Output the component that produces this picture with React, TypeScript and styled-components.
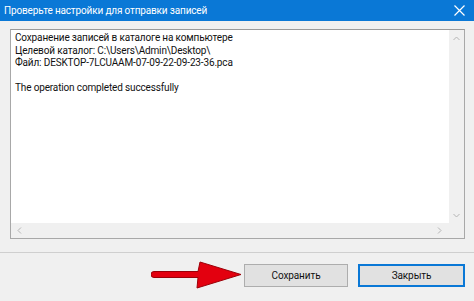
import React from "react";
import styled, { createGlobalStyle } from "styled-components";

const Global = createGlobalStyle`
  html, body { margin: 0; padding: 0; }
  body { width: 474px; height: 301px; overflow: hidden; background: #f0f0f0;
    font-family: Roboto, "Noto Sans", sans-serif; }
`;

const Window = styled.div`
  width: 474px;
  height: 301px;
  display: flex;
  flex-direction: column;
  background: #f0f0f0;
`;

const TitleBar = styled.div`
  height: 21px;
  background: #0a78d6;
  color: #fff;
  display: flex;
  align-items: center;
  justify-content: space-between;
  padding: 0 8px 0 4px;
  font-size: 10px;
  letter-spacing: -0.15px;
`;

const CloseX = styled.svg`
  width: 11px;
  height: 11px;
  margin-right: 1px;
`;

const Body = styled.div`
  padding: 8px 9px 0 10px;
  height: 223px;
  display: flex;
  flex-direction: column;
  border-bottom: 1px solid #cfcfcf;
`;

const TextBox = styled.div`
  height: 208px;
  border: 1px solid #a8a8a8;
  border-top-color: #9a9a9a;
  background: #fff;
  display: grid;
  grid-template-columns: 1fr 15px;
  grid-template-rows: 1fr 15px;
`;

const Content = styled.div`
  padding: 2px 4px;
  font-size: 10px;
  letter-spacing: -0.15px;
  line-height: 12.5px;
  color: #111;
  white-space: pre;
`;

const VScroll = styled.div`
  background: #f0f0f0;
  display: flex;
  flex-direction: column;
  justify-content: space-between;
  align-items: center;
  padding: 5px 0 4px;
`;

const HScroll = styled.div`
  background: #f0f0f0;
  display: flex;
  justify-content: space-between;
  align-items: center;
  padding: 0 6px 0 5px;
`;

const Corner = styled.div`
  background: #f0f0f0;
`;

const Footer = styled.div`
  flex: 1;
  display: flex;
  justify-content: flex-end;
  align-items: center;
  gap: 10px;
  padding: 0 9px 4px 0;
`;

const Button = styled.button<{ $primary?: boolean }>`
  width: ${(p) => (p.$primary ? "107px" : "104px")};
  height: 23px;
  font-family: inherit;
  font-size: 10px;
  letter-spacing: -0.1px;
  color: #111;
  background: #e1e1e1;
  border: ${(p) => (p.$primary ? "2px solid #0a78d6" : "1px solid #adadad")};
  padding: 0;
`;

const Arrow = styled.svg`
  width: 92px;
  height: 30px;
  margin-right: -9px;
  margin-top: 2px;
  z-index: 1;
`;

const Chevron = ({ d }: { d: string }) => (
  <svg width="7" height="7" viewBox="0 0 7 7">
    <path d={d} stroke="#b4b4b4" strokeWidth="1" fill="none" />
  </svg>
);

export default function App() {
  return (
    <Window>
      <Global />
      <TitleBar>
        <span>Проверьте настройки для отправки записей</span>
        <CloseX viewBox="0 0 11 11">
          <path d="M0.5 0.5 L10.5 10.5 M10.5 0.5 L0.5 10.5" stroke="#fff" strokeWidth="1.2" />
        </CloseX>
      </TitleBar>
      <Body>
        <TextBox>
          <Content>
            {"Сохранение записей в каталоге на компьютере\nЦелевой каталог: C:\\Users\\Admin\\Desktop\\\nФайл: DESKTOP-7LCUAAM-07-09-22-09-23-36.pca\n\nThe operation completed successfully"}
          </Content>
          <VScroll>
            <Chevron d="M0.5 5 L3.5 2 L6.5 5" />
            <Chevron d="M0.5 2 L3.5 5 L6.5 2" />
          </VScroll>
          <HScroll>
            <Chevron d="M5 0.5 L2 3.5 L5 6.5" />
            <Chevron d="M2 0.5 L5 3.5 L2 6.5" />
          </HScroll>
          <Corner />
        </TextBox>
      </Body>
      <Footer>
        <Arrow viewBox="0 0 92 30">
          <path
            d="M3 10.5 L47 10.5 L49 1 L90 13.5 L46 27 L47 16.5 L3 16.5 A3 3 0 0 1 3 10.5 Z"
            fill="#e3000f"
            stroke="#9c0008"
            strokeWidth="1"
            strokeLinejoin="round"
          />
        </Arrow>
        <Button>Сохранить</Button>
        <Button $primary>Закрыть</Button>
      </Footer>
    </Window>
  );
}
